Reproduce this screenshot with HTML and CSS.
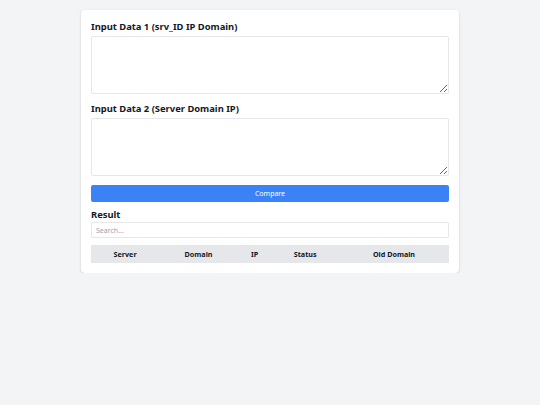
FILE: index.html
```html
<!DOCTYPE html>
<html>
<head>
<meta charset="utf-8">
<link rel="stylesheet" href="styles.css">
</head>
<body>
<div class="card">
  <label class="label">Input Data 1 (srv_ID IP Domain)</label>
  <textarea class="area"></textarea>
  <label class="label second">Input Data 2 (Server Domain IP)</label>
  <textarea class="area"></textarea>
  <button class="btn">Compare</button>
  <div class="label result">Result</div>
  <input class="search" type="text" placeholder="Search...">
  <table class="table">
    <thead>
      <tr><th>Server</th><th>Domain</th><th>IP</th><th>Status</th><th>Old Domain</th></tr>
    </thead>
    <tbody></tbody>
  </table>
</div>
</body>
</html>
```
FILE: styles.css
```css
html, body {
  margin: 0;
  padding: 0;
  background: #f3f4f6;
  font-family: "Noto Sans", "Open Sans", sans-serif;
  color: #111827;
}
.card {
  box-sizing: border-box;
  width: 378px;
  margin: 10px auto 0 81px;
  background: #fff;
  border-radius: 4px;
  box-shadow: 0 1px 3px rgba(0,0,0,0.12), 0 1px 2px rgba(0,0,0,0.06);
  padding: 10px 10px 10px;
  display: flex;
  flex-direction: column;
}
.label {
  display: block;
  font-size: 9.4px;
  font-weight: 700;
  line-height: 13px;
  margin-bottom: 3px;
}
.second { margin-top: 8px; }
.area {
  box-sizing: border-box;
  height: 58px;
  width: 100%;
  border: 1px solid #e5e7eb;
  border-radius: 2px;
  margin: 0;
  padding: 4px;
  font-family: inherit;
  font-size: 7px;
  resize: vertical;
}
.btn {
  margin-top: 9px;
  height: 17px;
  border: 0;
  border-radius: 2px;
  background: #3b82f6;
  color: #fff;
  font-family: inherit;
  font-size: 7px;
  padding: 0;
}
.result { margin-top: 6px; margin-bottom: 1px; }
.search {
  box-sizing: border-box;
  height: 16px;
  width: 100%;
  border: 1px solid #e5e7eb;
  border-radius: 2px;
  margin: 0;
  padding: 0 4px;
  font-family: inherit;
  font-size: 7px;
  outline: none;
}
.search::placeholder { color: #9ca3af; }
.table {
  margin-top: 7px;
  width: 100%;
  border-collapse: collapse;
}
.table th {
  background: #e5e7eb;
  height: 18px;
  padding: 0 4px;
  font-size: 7.2px;
  font-weight: 700;
  text-align: center;
}
```
